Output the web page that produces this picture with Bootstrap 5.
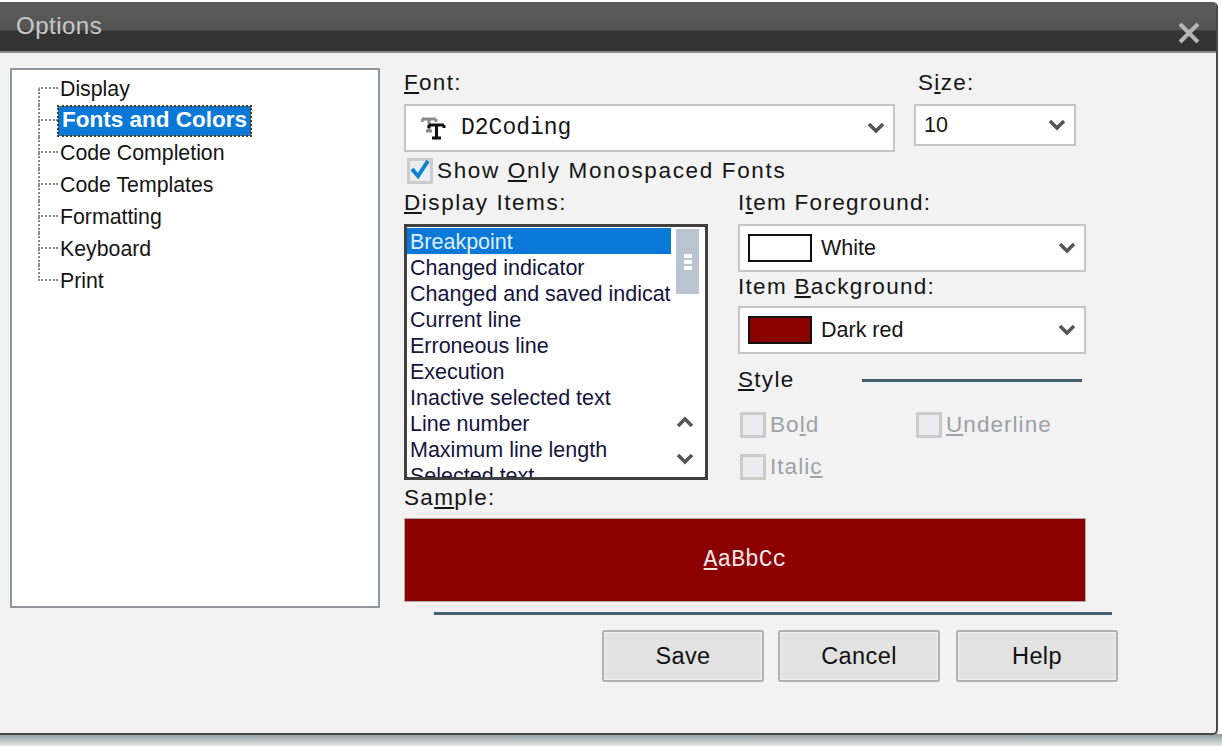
<!DOCTYPE html>
<html lang="en">
<head>
<meta charset="utf-8">
<title>Options</title>
<link rel="stylesheet" href="https://cdn.jsdelivr.net/npm/bootstrap@5.3.0/dist/css/bootstrap.min.css">
<style>
html,body{margin:0;height:746px;overflow:hidden;background:#fff}
body{background:linear-gradient(#8f9a9c,#e4e8e8 12px) 0 734px/100% 12px no-repeat,#fff;font-family:"Liberation Sans",Arial,sans-serif;color:#151515}
.dlg{width:1218px;height:733px;margin-top:2px;border-right:2px solid #4a4a4a;border-bottom:2px solid #4a4a4a;border-radius:0 5px 5px 0;background:#f2f2f2;overflow:hidden}
.titlebar{height:51px;background:linear-gradient(#5a5a5a,#555 28px,#333 29px,#333);border-bottom:2px solid #8a8a8a;color:#c9c9c9;font:24px/1 "Liberation Sans",sans-serif;letter-spacing:.5px;padding:12px 0 0 16px}
.xmark{margin-top:8px;margin-right:16px}
.main{padding:15px 0 0 10px}
.treebox{width:370px;height:540px;background:#fff;border:2px solid #8f969c;padding:3px 0 0 26px;flex:none}
.treerow{height:32px;font-size:21.3px;line-height:32px;white-space:nowrap}
.conn{width:20px;align-self:stretch;flex:none;margin-right:2px}
.conn i{display:block;height:50%;border-left:2px dotted #8a8a8a}
.conn i:first-child{border-bottom:2px dotted #8a8a8a}
.treerow:first-child .conn i:first-child{border-left-color:transparent}
.treerow:last-child .conn i:last-child{border-left-color:transparent}
.treesel{background:#0a78d7;color:#fff;font-weight:700;outline:2px dotted #5a3a10;outline-offset:-1px;line-height:28px;height:30px;padding:0 4px;margin-left:-2px;font-size:22.5px}
.right{margin-left:24px;width:720px;flex:none;padding-top:2px}
.lbl{font-size:22.5px;letter-spacing:1.3px;line-height:26px;white-space:nowrap;display:block}
.lbl-wide{letter-spacing:1.65px}
.lbl-mid{letter-spacing:1.55px}
.combo{background:#fff;border:2px solid #c4c4c4;padding-right:8px;font-size:21.5px;white-space:nowrap}
.cb-font{width:491px;height:48px;padding-left:15px;margin-top:8px}
.cb-size{width:162px;height:42px;padding-left:8px;margin-top:8px}
.mono{font-family:"Liberation Mono",monospace;font-size:23px}
.fontcol{flex:none;width:510px}
.sizelbl{padding-left:4px}
.ttico{margin-right:14px}
.swatch{width:64px;height:28px;border:2px solid #111;margin:0 9px 0 8px;display:block;flex:none}
.swatch-red{background:#8b0000}
.swatch-white{background:#fff}
.colcombo{width:348px;height:48px;padding-left:0}
.combo-gap{margin-top:6px}
.label-gap{margin-top:2px}
.checkline{height:30px;margin-top:4px}
.cbx{width:26px;height:26px;border:3px solid #cbcbcb;background:#e9edf1;display:block;flex:none;margin-right:4px}
.cbx svg{display:block;margin:-3px 0 0 0}
.check-outer{margin-left:3px}
.middle{margin-top:4px;height:295px}
.listcol{width:304px;flex:none;margin-right:30px}
.itemlist{height:256px;border:3px solid #404040;background:#fff;margin-top:8px;overflow:hidden;padding:1px 0 0 0}
.itemtext{width:264px;flex:none;overflow:hidden;font-size:21.5px;line-height:28px;white-space:nowrap}
.itemtext div{padding-left:3px;height:26px;color:#14143c}
.itemtext .picked{background:#0a78d7;color:#dfefff}
.scroller{width:34px;flex:none;padding:1px 6px 0 5px;height:248px}
.thumb{height:65px;background:#b8c4cf}
.grip{width:8px;height:16px;background:repeating-linear-gradient(#fff 0 4px,transparent 4px 6px)}
.arrows{margin-top:122px;height:49px;padding-right:5px}
.colcol{width:348px;flex:none}
.stylerow{margin-top:11px;height:30px}
.ruleline{height:3px;background:#44606f;flex:none}
.rule-style{width:220px;margin-left:67px;margin-top:1px}
.rule-foot{width:678px;margin-left:30px;margin-top:10px}
.disabled-t{color:#9ba1a8;font-size:22.5px;letter-spacing:1.05px;line-height:34px}
.stylegrid{display:grid;grid-template-columns:176px 1fr;row-gap:8px;margin-top:13px;padding-left:2px}
.samplebox{width:682px;height:84px;background:#8b0000;border:1px solid #aaa;color:#f4e8e8;margin-top:7px;font-family:"Liberation Mono",monospace;font-size:23px}
.footbtns{gap:14px;margin-top:15px;width:714px}
.wbtn{width:162px;height:52px;padding:0;background:#e2e2e2;border:2px solid #b0b0b0;border-radius:2px;font-size:23.5px;letter-spacing:.4px;line-height:46px;color:#111;box-shadow:inset 0 0 0 1px #eee}
.wbtn:hover{background:#e2e2e2;border-color:#b0b0b0;color:#111}
.wbtn-last{margin-left:2px}
</style>
</head>
<body>
<div class="dlg">
  <div class="titlebar d-flex justify-content-between">
    <span>Options</span>
    <svg class="xmark" width="22" height="22" viewBox="0 0 22 22"><path d="M2 2 20 20M20 2 2 20" stroke="#b5b5b5" stroke-width="4"/></svg>
  </div>
  <div class="main d-flex">
    <div class="treebox">
      <div class="treerow d-flex align-items-center"><span class="conn"><i></i><i></i></span><span>Display</span></div>
      <div class="treerow d-flex align-items-center"><span class="conn"><i></i><i></i></span><span class="treesel">Fonts and Colors</span></div>
      <div class="treerow d-flex align-items-center"><span class="conn"><i></i><i></i></span><span>Code Completion</span></div>
      <div class="treerow d-flex align-items-center"><span class="conn"><i></i><i></i></span><span>Code Templates</span></div>
      <div class="treerow d-flex align-items-center"><span class="conn"><i></i><i></i></span><span>Formatting</span></div>
      <div class="treerow d-flex align-items-center"><span class="conn"><i></i><i></i></span><span>Keyboard</span></div>
      <div class="treerow d-flex align-items-center"><span class="conn"><i></i><i></i></span><span>Print</span></div>
    </div>
    <div class="right">
      <div class="d-flex">
        <div class="fontcol">
          <label class="lbl"><u>F</u>ont:</label>
          <div class="combo cb-font d-flex align-items-center">
            <svg class="ttico" width="26" height="26" viewBox="0 0 26 26"><path d="M1 4h14M1 4v3M15 4v3M8 4v12M5 16h6" stroke="#8a8a8a" stroke-width="3" fill="none"/><path d="M8 10h15M8 10v3M23 10v3M15.500 10v13M11 23h9" stroke="#111" stroke-width="3" fill="none"/></svg>
            <span class="mono">D2Coding</span>
            <svg class="ms-auto" width="18" height="12" viewBox="0 0 18 12"><path d="M2 2 9 9 16 2" stroke="#555" stroke-width="3.500" fill="none"/></svg>
          </div>
        </div>
        <div>
          <label class="lbl sizelbl">S<u>i</u>ze:</label>
          <div class="combo cb-size d-flex align-items-center">
            <span>10</span>
            <svg class="ms-auto" width="18" height="12" viewBox="0 0 18 12"><path d="M2 2 9 9 16 2" stroke="#555" stroke-width="3.500" fill="none"/></svg>
          </div>
        </div>
      </div>
      <div class="checkline d-flex align-items-center check-outer">
        <span class="cbx"><svg width="20" height="22" viewBox="0 0 20 22"><path d="M2 11 8 18 18 3" stroke="#0a84d0" stroke-width="4" fill="none"/></svg></span>
        <span class="lbl lbl-wide">Show <u>O</u>nly Monospaced Fonts</span>
      </div>
      <div class="middle d-flex">
        <div class="listcol">
          <label class="lbl lbl-mid"><u>D</u>isplay Items:</label>
          <div class="itemlist d-flex">
            <div class="itemtext">
              <div class="picked">Breakpoint</div>
              <div>Changed indicator</div>
              <div>Changed and saved indicator</div>
              <div>Current line</div>
              <div>Erroneous line</div>
              <div>Execution</div>
              <div>Inactive selected text</div>
              <div>Line number</div>
              <div>Maximum line length</div>
              <div>Selected text</div>
            </div>
            <div class="scroller">
              <div class="thumb d-flex align-items-center justify-content-center"><div class="grip"></div></div>
              <div class="arrows d-flex flex-column justify-content-between align-items-center">
                <svg width="18" height="12" viewBox="0 0 18 12"><path d="M2 10 9 3 16 10" stroke="#555" stroke-width="3.500" fill="none"/></svg>
                <svg width="18" height="12" viewBox="0 0 18 12"><path d="M2 2 9 9 16 2" stroke="#555" stroke-width="3.500" fill="none"/></svg>
              </div>
            </div>
          </div>
        </div>
        <div class="colcol">
          <label class="lbl">I<u>t</u>em Foreground:</label>
          <div class="combo colcombo d-flex align-items-center mt-2">
            <span class="swatch swatch-white"></span><span>White</span>
            <svg class="ms-auto" width="18" height="12" viewBox="0 0 18 12"><path d="M2 2 9 9 16 2" stroke="#555" stroke-width="3.500" fill="none"/></svg>
          </div>
          <label class="lbl label-gap">Item <u>B</u>ackground:</label>
          <div class="combo colcombo d-flex align-items-center combo-gap">
            <span class="swatch swatch-red"></span><span>Dark red</span>
            <svg class="ms-auto" width="18" height="12" viewBox="0 0 18 12"><path d="M2 2 9 9 16 2" stroke="#555" stroke-width="3.500" fill="none"/></svg>
          </div>
          <div class="stylerow d-flex align-items-center">
            <span class="lbl"><u>S</u>tyle</span>
            <span class="ruleline rule-style"></span>
          </div>
          <div class="stylegrid">
            <div class="d-flex align-items-center"><span class="cbx"></span><span class="disabled-t">Bo<u>l</u>d</span></div>
            <div class="d-flex align-items-center"><span class="cbx"></span><span class="disabled-t"><u>U</u>nderline</span></div>
            <div class="d-flex align-items-center"><span class="cbx"></span><span class="disabled-t">Itali<u>c</u></span></div>
          </div>
        </div>
      </div>
      <label class="lbl">Sa<u>m</u>ple:</label>
      <div class="samplebox d-flex align-items-center justify-content-center"><span><u>A</u>aBbCc</span></div>
      <div class="ruleline rule-foot"></div>
      <div class="footbtns d-flex justify-content-end">
        <button type="button" class="btn wbtn">Save</button>
        <button type="button" class="btn wbtn">Cancel</button>
        <button type="button" class="btn wbtn wbtn-last">Help</button>
      </div>
    </div>
  </div>
</div>
</body>
</html>
